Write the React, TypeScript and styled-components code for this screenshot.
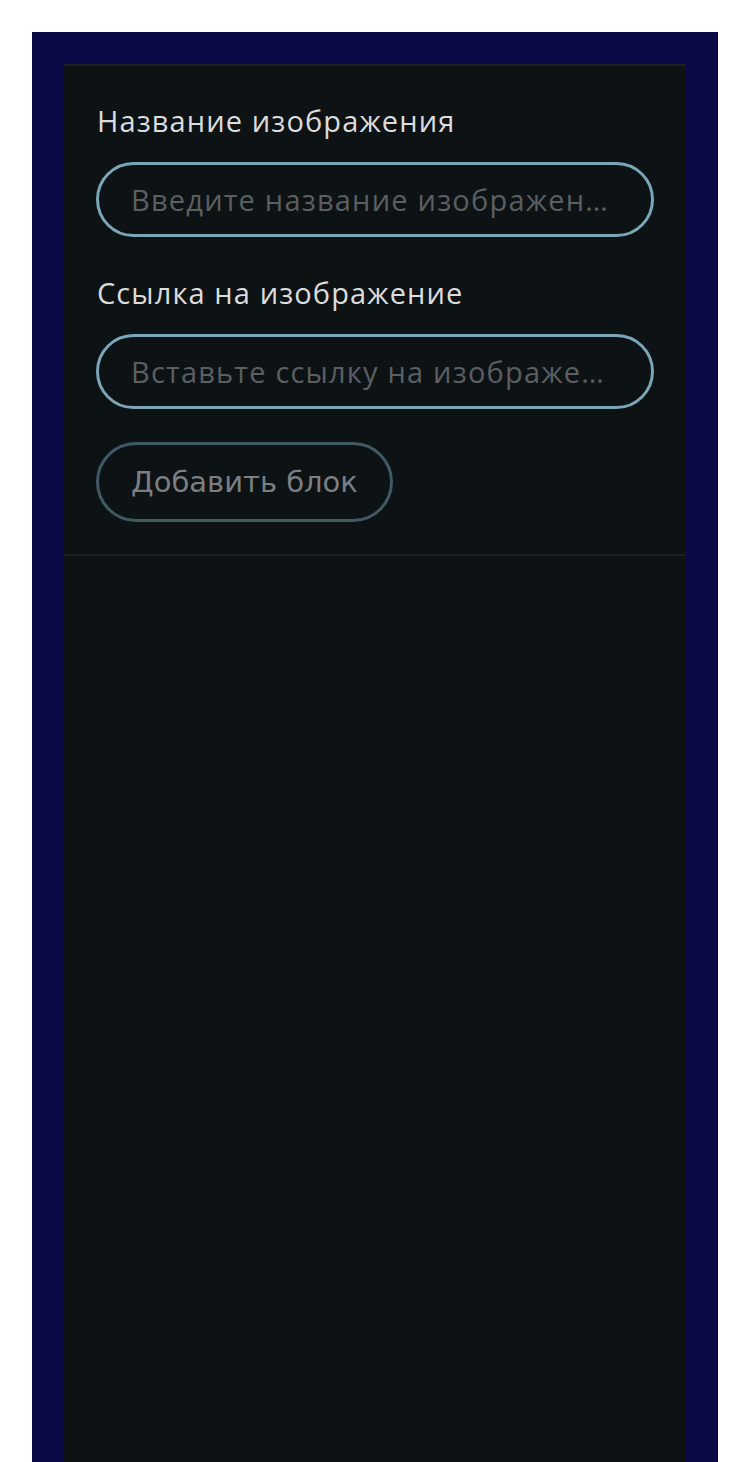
import React, { useState } from "react";
import styled, { createGlobalStyle } from "styled-components";

const GlobalStyle = createGlobalStyle`
  html, body {
    margin: 0;
    padding: 0;
    background: #ffffff;
  }
  #root {
    min-height: 100vh;
  }
`;

const Page = styled.div`
  padding: 32px 32px 0 32px;
  min-height: 100vh;
  box-sizing: border-box;
  display: flex;
`;

const Frame = styled.div`
  flex: 1;
  background: #0b0846;
  padding: 32px 32px 0 32px;
  display: flex;
`;

const Panel = styled.div`
  flex: 1;
  background: #0d1215;
  border-top: 2px solid #1a1f22;
  display: flex;
  flex-direction: column;
`;

const Form = styled.form`
  padding: 32px 32px 32px 32px;
  border-bottom: 2px solid #1a1f22;
  display: flex;
  flex-direction: column;
  align-items: flex-start;
`;

const Label = styled.label`
  font-family: "Open Sans", "Noto Sans", sans-serif;
  font-size: 29px;
  line-height: 36px;
  letter-spacing: 1.1px;
  color: #dcdcdc;
  margin: 5px 0 23px 1px;
`;

const Field = styled.input`
  box-sizing: border-box;
  width: 558px;
  height: 75px;
  border: 3px solid #7aa6b8;
  border-radius: 40px;
  background: transparent;
  padding: 0 32px;
  font-family: "Open Sans", "Noto Sans", sans-serif;
  font-size: 29px;
  letter-spacing: 1.2px;
  color: #dcdcdc;
  outline: none;
  margin-bottom: 33px;
  text-overflow: ellipsis;

  &::placeholder {
    color: #5b5f62;
  }
`;

const AddButton = styled.button`
  box-sizing: border-box;
  height: 80px;
  padding: 0 32px;
  border: 3px solid #3e5a65;
  border-radius: 40px;
  background: transparent;
  color: #7b7f82;
  font-family: "DejaVu Sans", sans-serif;
  font-size: 29px;
  cursor: pointer;
`;

const App: React.FC = () => {
  const [title, setTitle] = useState("");
  const [link, setLink] = useState("");

  return (
    <>
      <GlobalStyle />
      <Page>
        <Frame>
          <Panel>
            <Form onSubmit={(e) => e.preventDefault()}>
              <Label htmlFor="title">Название изображения</Label>
              <Field
                id="title"
                value={title}
                onChange={(e) => setTitle(e.target.value)}
                placeholder="Введите название изображения"
              />
              <Label htmlFor="link">Ссылка на изображение</Label>
              <Field
                id="link"
                value={link}
                onChange={(e) => setLink(e.target.value)}
                placeholder="Вставьте ссылку на изображение"
              />
              <AddButton type="submit">Добавить блок</AddButton>
            </Form>
          </Panel>
        </Frame>
      </Page>
    </>
  );
};

export default App;
